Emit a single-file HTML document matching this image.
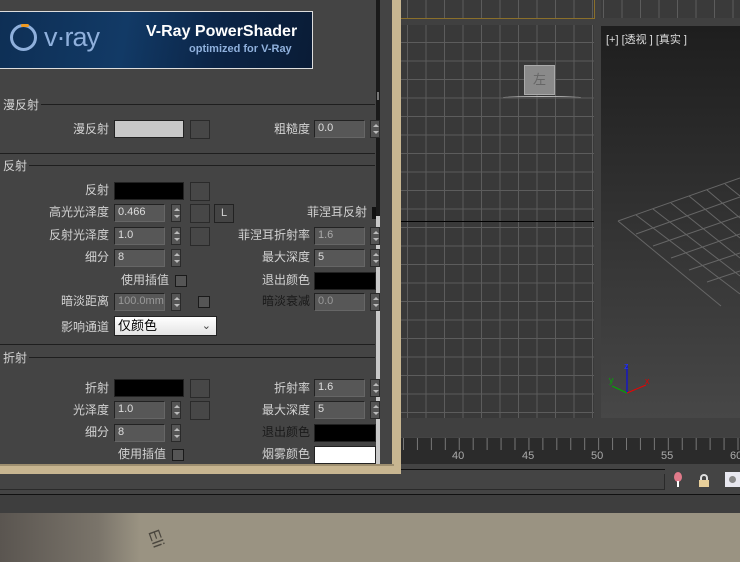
<!DOCTYPE html>
<html><head><meta charset="utf-8"><style>
*{margin:0;padding:0;box-sizing:border-box}
body{width:740px;height:562px;overflow:hidden;background:#444;position:relative;font-family:"Liberation Sans","Noto Sans CJK SC",sans-serif;font-size:12px;color:#d2d2d2}
.a{position:absolute}
.lbl{position:absolute;text-align:right;white-space:nowrap;line-height:14px}
.in{position:absolute;width:51px;height:18px;background:#575757;border:1px solid #222;border-right-color:#666;border-bottom-color:#666;color:#ddd;font-size:11px;padding-left:3px;line-height:15px}
.sp{position:absolute;width:10px;height:18px;background:#555;border:1px solid #2a2a2a}
.sp:before{content:"";position:absolute;left:2px;top:3px;border-left:3px solid transparent;border-right:3px solid transparent;border-bottom:3px solid #bbb}
.sp:after{content:"";position:absolute;left:2px;top:10px;border-left:3px solid transparent;border-right:3px solid transparent;border-top:3px solid #bbb}
.sw{position:absolute;width:70px;height:18px;border:1px solid #222}
.bx{position:absolute;width:20px;height:19px;border:1px solid #2a2a2a;background:#474747}
.cb{position:absolute;width:12px;height:12px;border:1px solid #1a1a1a;background:#555}
.hl{position:absolute;height:1px;background:#1e1e1e}
</style></head><body>
<!-- banner -->
<div class="a" style="left:0;top:11px;width:313px;height:58px;border:1px solid #ddd;border-left:none;background:linear-gradient(100deg,#0e2f55 0%,#123a66 40%,#0b2446 70%,#0a1c36 100%)"></div>
<div class="a" style="left:10px;top:24px;width:27px;height:27px;border:3px solid #8fb0dc;border-radius:50%"></div>
<div class="a" style="left:21px;top:24px;width:8px;height:3px;background:#f09a20;border-radius:2px"></div>
<div class="a" style="left:44px;top:22px;font-size:27px;color:#8fb0dc;letter-spacing:-1px">v·ray</div>
<div class="a" style="left:146px;top:23px;font-size:16px;font-weight:bold;color:#fff">V-Ray PowerShader</div>
<div class="a" style="left:189px;top:43px;font-size:11px;font-weight:bold;color:#8fb0dc">optimized for V-Ray</div>

<!-- scrollbar & frame -->
<div class="a" style="left:376px;top:0;width:4px;height:466px;background:#1a1a1a"></div>
<div class="a" style="left:376px;top:216px;width:4px;height:250px;background:#c8c8c8"></div>
<div class="a" style="left:377px;top:92px;width:2px;height:8px;background:#777"></div>
<div class="a" style="left:392px;top:0;width:9px;height:474px;background:#c8b691"></div>
<div class="a" style="left:0;top:465px;width:401px;height:9px;background:#c8b691"></div>
<div class="a" style="left:0;top:464px;width:394px;height:2px;background:#9e8f70"></div>

<!-- section headers -->
<div class="lbl" style="left:3px;top:98px">漫反射</div><div class="hl" style="left:41px;top:104px;width:334px"></div>
<div class="hl" style="left:0;top:153px;width:375px"></div>
<div class="lbl" style="left:3px;top:159px">反射</div><div class="hl" style="left:29px;top:165px;width:346px"></div>
<div class="hl" style="left:0;top:344px;width:375px"></div>
<div class="lbl" style="left:3px;top:351px">折射</div><div class="hl" style="left:29px;top:357px;width:346px"></div>

<!-- diffuse -->
<div class="lbl" style="right:631px;top:122px">漫反射</div>
<div class="sw" style="left:114px;top:120px;background:#c8c8c8"></div>
<div class="bx" style="left:190px;top:120px"></div>
<div class="lbl" style="right:430px;top:122px">粗糙度</div>
<div class="in" style="left:314px;top:120px">0.0</div><div class="sp" style="left:370px;top:120px"></div>

<!-- reflection -->
<div class="lbl" style="right:631px;top:183px">反射</div>
<div class="sw" style="left:114px;top:182px;background:#000"></div>
<div class="bx" style="left:190px;top:182px"></div>

<div class="lbl" style="right:631px;top:205px">高光光泽度</div>
<div class="in" style="left:114px;top:204px">0.466</div><div class="sp" style="left:171px;top:204px"></div>
<div class="bx" style="left:190px;top:204px"></div>
<div class="a" style="left:214px;top:204px;width:20px;height:19px;border:1px solid #222;text-align:center;line-height:17px;font-size:11px">L</div>
<div class="lbl" style="right:373px;top:205px">菲涅耳反射</div>
<div class="a" style="left:372px;top:207px;width:4px;height:12px;background:#111"></div>

<div class="lbl" style="right:631px;top:228px">反射光泽度</div>
<div class="in" style="left:114px;top:227px">1.0</div><div class="sp" style="left:171px;top:227px"></div>
<div class="bx" style="left:190px;top:227px"></div>
<div class="lbl" style="right:430px;top:228px">菲涅耳折射率</div>
<div class="in" style="left:314px;top:227px;color:#aaa">1.6</div><div class="sp" style="left:370px;top:227px"></div>

<div class="lbl" style="right:631px;top:250px">细分</div>
<div class="in" style="left:114px;top:249px">8</div><div class="sp" style="left:171px;top:249px"></div>
<div class="lbl" style="right:430px;top:250px">最大深度</div>
<div class="in" style="left:314px;top:249px">5</div><div class="sp" style="left:370px;top:249px"></div>

<div class="lbl" style="right:571px;top:273px">使用插值</div>
<div class="cb" style="left:175px;top:275px"></div>
<div class="lbl" style="right:430px;top:273px">退出颜色</div>
<div class="sw" style="left:314px;top:272px;width:62px;background:#000"></div>

<div class="lbl" style="right:631px;top:294px">暗淡距离</div>
<div class="in" style="left:114px;top:293px;color:#999">100.0mm</div><div class="sp" style="left:171px;top:293px"></div>
<div class="cb" style="left:198px;top:296px"></div>
<div class="lbl" style="right:430px;top:294px;color:#1a1a1a">暗淡衰减</div>
<div class="in" style="left:314px;top:293px;color:#999">0.0</div><div class="sp" style="left:370px;top:293px"></div>

<div class="lbl" style="right:631px;top:320px">影响通道</div>
<div class="a" style="left:114px;top:316px;width:103px;height:20px;background:linear-gradient(#fff,#e4e4e4);border:1px solid #222;color:#000;font-size:13px;padding-left:3px;line-height:18px">仅颜色<span style="position:absolute;right:5px;top:0;color:#444;font-size:11px">&#8964;</span></div>

<!-- refraction -->
<div class="lbl" style="right:631px;top:381px">折射</div>
<div class="sw" style="left:114px;top:379px;background:#000"></div>
<div class="bx" style="left:190px;top:379px"></div>
<div class="lbl" style="right:430px;top:381px">折射率</div>
<div class="in" style="left:314px;top:379px">1.6</div><div class="sp" style="left:370px;top:379px"></div>

<div class="lbl" style="right:631px;top:403px">光泽度</div>
<div class="in" style="left:114px;top:401px">1.0</div><div class="sp" style="left:171px;top:401px"></div>
<div class="bx" style="left:190px;top:401px"></div>
<div class="lbl" style="right:430px;top:403px">最大深度</div>
<div class="in" style="left:314px;top:401px">5</div><div class="sp" style="left:370px;top:401px"></div>

<div class="lbl" style="right:631px;top:425px">细分</div>
<div class="in" style="left:114px;top:424px">8</div><div class="sp" style="left:171px;top:424px"></div>
<div class="lbl" style="right:430px;top:425px;color:#1a1a1a">退出颜色</div>
<div class="sw" style="left:314px;top:424px;width:62px;background:#000"></div>

<div class="lbl" style="right:574px;top:447px">使用插值</div>
<div class="cb" style="left:172px;top:449px"></div>
<div class="lbl" style="right:430px;top:447px">烟雾颜色</div>
<div class="sw" style="left:314px;top:446px;width:62px;background:#fff"></div>

<!-- viewports -->
<div class="a" style="left:401px;top:0;width:339px;height:437px;background:#404040"></div>
<div class="a" style="left:401px;top:0;width:194px;height:19px;background-color:#3a3a3a;background-image:linear-gradient(90deg,#5c5c5c 1px,transparent 1px);background-size:18.5px 100%;background-position:6px 0;border-bottom:1px solid #8a6f2a;border-right:1px solid #8a6f2a"></div>
<div class="a" style="left:601px;top:0;width:139px;height:18px;background-color:#3a3a3a;background-image:linear-gradient(90deg,#5c5c5c 1px,transparent 1px);background-size:18.5px 100%;background-position:2px 0"></div>
<div class="a" style="left:401px;top:25px;width:193px;height:393px;background-color:#393939;background-image:linear-gradient(90deg,#5c5c5c 1px,transparent 1px),linear-gradient(#5c5c5c 1px,transparent 1px);background-size:18.5px 18.5px;background-position:6px 0,0 17px"></div>
<div class="a" style="left:401px;top:221px;width:193px;height:1px;background:#000"></div>
<div class="a" style="left:524px;top:65px;width:31px;height:30px;background:#8a8a8a;border:1px solid #aaa;color:#666;text-align:center;line-height:28px;font-size:13px">左</div>
<div class="a" style="left:503px;top:96px;width:78px;height:3px;border-top:1px solid #bbb;border-radius:50%"></div>
<div class="a" style="left:601px;top:26px;width:139px;height:392px;background:linear-gradient(#1e1e1e,#474747)"></div>
<div class="a" style="left:606px;top:31px;font-size:11px;color:#ddd;white-space:nowrap">[+] [透视 ] [真实 ]</div>
<svg class="a" style="left:601px;top:26px" width="139" height="392">
<g stroke="#666" stroke-width="1" fill="none">
<path d="M17 195 L139 152 M35 208 L139 171 M52 220 L139 190 M70 232 L139 208 M88 244 L139 227 M106 256 L139 245"/>
<path d="M17 195 L120 280 M35 189 L139 268 M52 183 L139 250 M70 177 L139 232 M88 170 L139 212 M106 164 L139 192 M124 158 L139 170"/>
</g>
<line x1="26" y1="338" x2="26" y2="367" stroke="#0000ff"/><text x="23" y="343" font-size="9" fill="#2233ff" font-family="Liberation Sans">z</text>
<line x1="26" y1="367" x2="45" y2="359" stroke="#e00"/><text x="44" y="358" font-size="9" fill="#d00" font-family="Liberation Sans">x</text>
<line x1="26" y1="367" x2="11" y2="360" stroke="#0a0"/><text x="8" y="357" font-size="9" fill="#0a0" font-family="Liberation Sans">y</text>
</svg>

<!-- timeline -->
<div class="a" style="left:401px;top:438px;width:339px;height:26px;background-color:#2b2b2b;background-image:linear-gradient(90deg,#777 1px,transparent 1px);background-size:13.95px 12px;background-repeat:repeat-x;background-position:2px 0"></div>
<div class="a" style="left:452px;top:450px;font-size:11px;color:#aaa">40</div>
<div class="a" style="left:522px;top:450px;font-size:11px;color:#aaa">45</div>
<div class="a" style="left:591px;top:450px;font-size:11px;color:#aaa">50</div>
<div class="a" style="left:661px;top:450px;font-size:11px;color:#aaa">55</div>
<div class="a" style="left:730px;top:450px;font-size:11px;color:#aaa">60</div>

<!-- status -->
<div class="a" style="left:0;top:474px;width:665px;height:16px;background:#444;border-bottom:1px solid #2a2a2a;border-right:1px solid #2a2a2a"></div>
<div class="a" style="left:401px;top:469px;width:264px;height:1px;background:#111"></div>
<div class="a" style="left:674px;top:472px;width:8px;height:10px;background:#e07a8a;border-radius:50%"></div>
<div class="a" style="left:677px;top:481px;width:2px;height:6px;background:#fff"></div>
<div class="a" style="left:700px;top:474px;width:8px;height:7px;border:2px solid #ddd;border-bottom:none;border-radius:4px 4px 0 0"></div>
<div class="a" style="left:699px;top:480px;width:10px;height:7px;background:#e8cf9a"></div>
<div class="a" style="left:725px;top:472px;width:15px;height:15px;background:#e8e8f0"></div>
<div class="a" style="left:729px;top:476px;width:7px;height:7px;border-radius:50%;background:#888"></div>
<div class="a" style="left:0;top:494px;width:740px;height:1px;background:#111"></div>
<div class="a" style="left:0;top:495px;width:740px;height:18px;background:#3e3e3e"></div>
<div class="a" style="left:0;top:513px;width:740px;height:49px;background:#9a9382"></div>
<div class="a" style="left:0;top:513px;width:140px;height:49px;background:linear-gradient(90deg,#5a5550,#7a746a 70%,#9a9382)"></div>
<div class="a" style="left:146px;top:530px;font-size:16px;color:#4a463e;transform:rotate(70deg)">Eli</div>
</body></html>
